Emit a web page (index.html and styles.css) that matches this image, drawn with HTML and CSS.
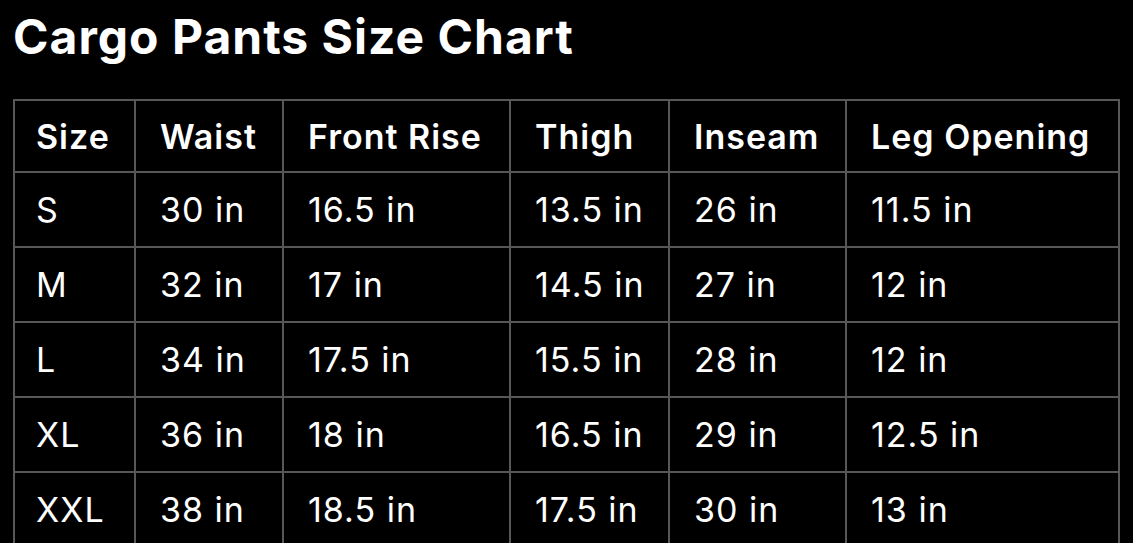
FILE: index.html
```html
<!DOCTYPE html>
<html>
<head>
<meta charset="utf-8">
<link rel="stylesheet" href="styles.css">
</head>
<body>
<div class="page">
  <h1 class="title">Cargo Pants Size Chart</h1>
  <table class="chart">
    <colgroup>
      <col class="c1"><col class="c2"><col class="c3"><col class="c4"><col class="c5"><col class="c6">
    </colgroup>
    <thead>
      <tr><th>Size</th><th>Waist</th><th>Front Rise</th><th>Thigh</th><th>Inseam</th><th>Leg Opening</th></tr>
    </thead>
    <tbody>
      <tr><td>S</td><td>30 in</td><td>16.5 in</td><td>13.5 in</td><td>26 in</td><td>11.5 in</td></tr>
      <tr><td>M</td><td>32 in</td><td>17 in</td><td>14.5 in</td><td>27 in</td><td>12 in</td></tr>
      <tr><td>L</td><td>34 in</td><td>17.5 in</td><td>15.5 in</td><td>28 in</td><td>12 in</td></tr>
      <tr><td>XL</td><td>36 in</td><td>18 in</td><td>16.5 in</td><td>29 in</td><td>12.5 in</td></tr>
      <tr><td>XXL</td><td>38 in</td><td>18.5 in</td><td>17.5 in</td><td>30 in</td><td>13 in</td></tr>
    </tbody>
  </table>
</div>
</body>
</html>
```

FILE: styles.css
```css
html, body {
  margin: 0;
  padding: 0;
  background: #000;
  color: #fff;
  font-family: Inter, "Noto Sans", sans-serif;
}
.page {
  padding: 9px 0 0 13px;
}
.title {
  margin: 0;
  font-size: 48px;
  font-weight: 700;
  line-height: 56px;
  letter-spacing: 1px;
}
.chart {
  margin-top: 34px;
  border-collapse: collapse;
  table-layout: fixed;
  width: 1105px;
}
.c1 { width: 121px; }
.c2 { width: 148px; }
.c3 { width: 227px; }
.c4 { width: 159px; }
.c5 { width: 177px; }
.c6 { width: 273px; }
.chart th, .chart td {
  border: 2px solid #575757;
  padding: 0 0 0 24px;
  text-align: left;
  font-size: 34px;
  letter-spacing: 1px;
  white-space: nowrap;
}
.chart th:first-child, .chart td:first-child {
  padding-left: 21px;
}
.chart th {
  height: 70px;
  font-weight: 600;
}
.chart td {
  height: 73px;
  font-weight: 400;
}
```
